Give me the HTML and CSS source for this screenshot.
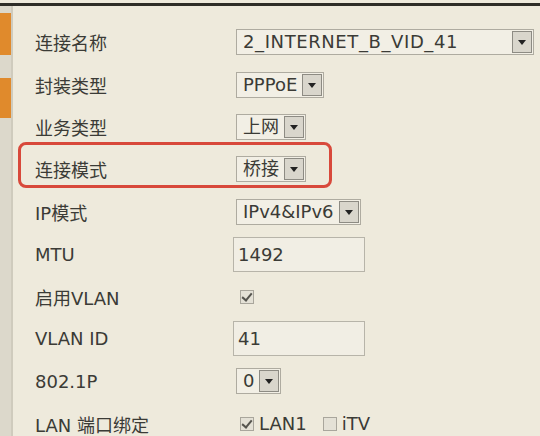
FILE: index.html
```html
<!DOCTYPE html>
<html lang="zh-CN">
<head>
  <meta charset="UTF-8">
  <title>WAN 连接配置</title>
  <link rel="stylesheet" href="styles.css">
</head>
<body>
<div class="topline"></div>
<div class="page">
    <div class="sidebar">
        <div class="tab"></div>
        <div class="tab second"></div>
    </div>

    <!-- WAN 连接参数 -->
    <div class="form">
        <div class="row">
            <div class="label">连接名称</div>
            <div class="select wide"><span class="value">2_INTERNET_B_VID_41</span><span class="arrow"></span></div>
        </div>
        <div class="row">
            <div class="label">封装类型</div>
            <div class="select"><span class="value">PPPoE</span><span class="arrow"></span></div>
        </div>
        <div class="row">
            <div class="label">业务类型</div>
            <div class="select"><span class="value">上网</span><span class="arrow"></span></div>
        </div>
        <div class="row marked">
            <div class="label">连接模式</div>
            <div class="select"><span class="value">桥接</span><span class="arrow"></span></div>
        </div>
        <div class="row">
            <div class="label">IP模式</div>
            <div class="select"><span class="value">IPv4&amp;IPv6</span><span class="arrow"></span></div>
        </div>
        <div class="row">
            <div class="label">MTU</div>
            <div class="input">1492</div>
        </div>
        <div class="row">
            <div class="label">启用VLAN</div>
            <span class="check on"></span>
        </div>
        <div class="row">
            <div class="label">VLAN ID</div>
            <div class="input">41</div>
        </div>
        <div class="row">
            <div class="label">802.1P</div>
            <div class="select"><span class="value">0</span><span class="arrow"></span></div>
        </div>
        <div class="row">
            <div class="label">LAN 端口绑定</div>
            <div class="ports">
                <span class="check on"></span><span class="port">LAN1</span>
                <span class="check"></span><span class="port">iTV</span>
            </div>
        </div>
    </div>
</div>
</body>
</html>
```

FILE: styles.css
```css
body {
  margin: 0;
  background-color: #eeeadc;
  font-family: "DejaVu Sans", "Noto Sans CJK SC", sans-serif;
  color: #3b3b36;
  height: 436px;
  overflow: hidden;
}
.topline {
  margin-top: 3px;
  height: 3px;
  background-color: #2e2d27;
}
.page {
  display: flex;
  height: 430px;
}
.sidebar {
  width: 11px;
  background-color: #dcd8cb;
  border-right: 2px solid #cfcbbd;
  padding-top: 7px;
  display: flex;
  flex-direction: column;
  gap: 23px;
}
.tab {
  height: 42px;
  background-color: #e08a2c;
}
.tab.second {
  height: 40px;
}
.form {
  padding-left: 22px;
  padding-top: 15px;
  flex: 1;
}
.row {
  display: flex;
  align-items: center;
  height: 42.4px;
  position: relative;
}
.label {
  width: 201px;
  font-size: 18px;
}
.select {
  display: flex;
  height: 24px;
  border: 1px solid #aeaba0;
  background-color: #f2efe5;
  font-size: 18px;
}
.select.wide {
  width: 296px;
}
.select.wide .value {
  letter-spacing: 0.6px;
}
.select .value {
  flex: 1;
  padding: 0 4px 0 6px;
  line-height: 24px;
}
.arrow {
  width: 18px;
  height: 20px;
  margin: 1px;
  background-color: #d9d6cc;
  border: 1px solid #8d8b83;
  position: relative;
}
.arrow::after {
  content: "";
  position: absolute;
  left: 5px;
  top: 8px;
  border-left: 4px solid transparent;
  border-right: 4px solid transparent;
  border-top: 5px solid #222;
}
.input {
  margin-left: -3px;
  width: 126px;
  height: 33px;
  line-height: 33px;
  padding-left: 4px;
  border: 1px solid #b7b4a9;
  background-color: #f1eee4;
  font-size: 18px;
}
.check {
  display: inline-block;
  width: 12px;
  height: 12px;
  margin-left: 4px;
  border: 1px solid #a9a69c;
  background-color: #e4e1d6;
  position: relative;
}
.check.on::after {
  content: "";
  position: absolute;
  left: 3px;
  top: 0px;
  width: 4px;
  height: 8px;
  border-right: 2px solid #55544e;
  border-bottom: 2px solid #55544e;
  transform: rotate(40deg);
}
.ports {
  display: flex;
  align-items: center;
  font-size: 18px;
}
.port {
  margin-left: 5px;
  margin-right: 12px;
}
.marked::after {
  content: "";
  position: absolute;
  left: -17px;
  top: -6px;
  width: 308px;
  height: 40px;
  border: 3px solid #d8493b;
  border-radius: 8px;
}
```
